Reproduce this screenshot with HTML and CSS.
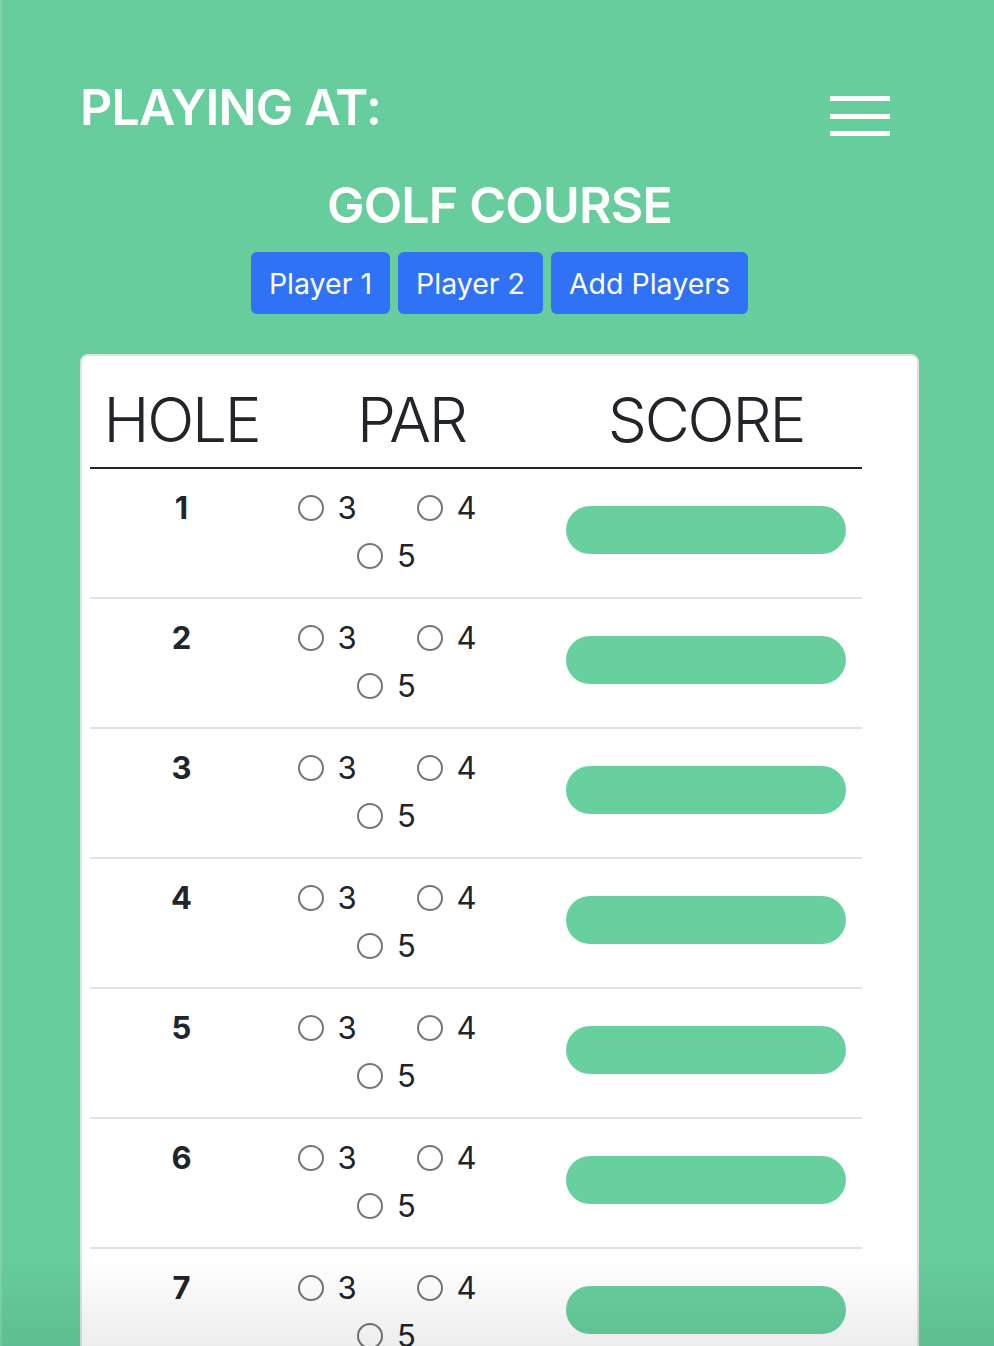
FILE: index.html
```html
<!DOCTYPE html>
<html lang="en">
<head>
<meta charset="utf-8">
<title>Golf Scorecard</title>
<link rel="stylesheet" href="styles.css">
</head>
<body>
<div class="page">
  <header class="topbar">
    <h3 class="playing">PLAYING AT:</h3>
    <button class="menu" aria-label="Menu">
      <svg width="60" height="40" viewBox="0 0 60 40"><rect x="0" y="0" width="60" height="5" fill="#fff"/><rect x="0" y="18" width="60" height="5" fill="#fff"/><rect x="0" y="35" width="60" height="5" fill="#fff"/></svg>
    </button>
  </header>
  <h3 class="course">GOLF COURSE</h3>
  <div class="players">
    <button class="btn">Player 1</button>
    <button class="btn">Player 2</button>
    <button class="btn">Add Players</button>
  </div>
  <div class="card">
    <div class="table">
      <div class="thead">
        <div class="th">HOLE</div>
        <div class="th">PAR</div>
        <div class="th">SCORE</div>
      </div>
      <div class="row">
        <div class="hole">1</div>
        <div class="par"><label class="opt"><input type="radio" name="p1"><span>3</span></label><label class="opt"><input type="radio" name="p1"><span>4</span></label><label class="opt"><input type="radio" name="p1"><span>5</span></label></div>
        <div class="score"><span class="pill"></span></div>
      </div>
      <div class="row">
        <div class="hole">2</div>
        <div class="par"><label class="opt"><input type="radio" name="p2"><span>3</span></label><label class="opt"><input type="radio" name="p2"><span>4</span></label><label class="opt"><input type="radio" name="p2"><span>5</span></label></div>
        <div class="score"><span class="pill"></span></div>
      </div>
      <div class="row">
        <div class="hole">3</div>
        <div class="par"><label class="opt"><input type="radio" name="p3"><span>3</span></label><label class="opt"><input type="radio" name="p3"><span>4</span></label><label class="opt"><input type="radio" name="p3"><span>5</span></label></div>
        <div class="score"><span class="pill"></span></div>
      </div>
      <div class="row">
        <div class="hole">4</div>
        <div class="par"><label class="opt"><input type="radio" name="p4"><span>3</span></label><label class="opt"><input type="radio" name="p4"><span>4</span></label><label class="opt"><input type="radio" name="p4"><span>5</span></label></div>
        <div class="score"><span class="pill"></span></div>
      </div>
      <div class="row">
        <div class="hole">5</div>
        <div class="par"><label class="opt"><input type="radio" name="p5"><span>3</span></label><label class="opt"><input type="radio" name="p5"><span>4</span></label><label class="opt"><input type="radio" name="p5"><span>5</span></label></div>
        <div class="score"><span class="pill"></span></div>
      </div>
      <div class="row">
        <div class="hole">6</div>
        <div class="par"><label class="opt"><input type="radio" name="p6"><span>3</span></label><label class="opt"><input type="radio" name="p6"><span>4</span></label><label class="opt"><input type="radio" name="p6"><span>5</span></label></div>
        <div class="score"><span class="pill"></span></div>
      </div>
      <div class="row">
        <div class="hole">7</div>
        <div class="par"><label class="opt"><input type="radio" name="p7"><span>3</span></label><label class="opt"><input type="radio" name="p7"><span>4</span></label><label class="opt"><input type="radio" name="p7"><span>5</span></label></div>
        <div class="score"><span class="pill"></span></div>
      </div>
    </div>
  </div>
</div>
<div class="fade"></div>
</body>
</html>
```

FILE: styles.css
```css
* { box-sizing: border-box; }
html, body { margin: 0; padding: 0; }
body {
  background: #67cd9c;
  font-family: "Inter", "Noto Sans", sans-serif;
  color: #212529;
  height: 1346px;
  overflow: hidden;
  border-left: 2px solid #7dd5aa;
}
.page {
  padding: 0 75px 0 78px;
}
.topbar {
  display: flex;
  justify-content: space-between;
  align-items: flex-start;
  padding-top: 76px;
}
.playing {
  margin: 0;
  color: #fff;
  font-size: 50px;
  font-weight: 600;
  line-height: 62px;
  letter-spacing: -0.8px;
}
.menu {
  background: none;
  border: 0;
  padding: 0;
  margin: 20px 29px 0 0;
  display: block;
  line-height: 0;
}
.course {
  margin: 36px 0 0;
  text-align: center;
  color: #fff;
  font-size: 50px;
  font-weight: 600;
  line-height: 62px;
  letter-spacing: -0.8px;
}
.players {
  display: flex;
  justify-content: center;
  gap: 8px;
  margin-top: 16px;
}
.btn {
  height: 62px;
  padding: 0 18px;
  background: #2f72f5;
  color: #fff;
  border: 0;
  border-radius: 6px;
  font-family: inherit;
  font-size: 28.5px;
  font-weight: 400;
}
.card {
  margin-top: 40px;
  background: #fff;
  border: 2px solid #e2e2e2;
  border-radius: 8px;
  padding: 0 8px;
}
.table {
  width: 772px;
}
.thead, .row {
  display: grid;
  grid-template-columns: 183px 277px 312px;
}
.thead {
  border-bottom: 2px solid #212529;
  padding: 25px 0 9px;
}
.th {
  text-align: center;
  font-size: 62px;
  font-weight: 300;
  line-height: 77px;
  letter-spacing: -2.2px;
}
.row {
  height: 130px;
  border-bottom: 2px solid #dee2e6;
}
.hole {
  text-align: center;
  font-weight: 700;
  font-size: 31px;
  line-height: 48px;
  padding-top: 15px;
}
.par {
  align-self: center;
  display: flex;
  flex-wrap: wrap;
  justify-content: center;
  padding-bottom: 2px;
}
.opt {
  width: 119px;
  height: 48px;
  display: inline-flex;
  align-items: center;
  padding-left: 5px;
  font-size: 31px;
  line-height: 48px;
}
.opt input {
  appearance: none;
  -webkit-appearance: none;
  width: 26px;
  height: 26px;
  margin: 0 14px 0 0;
  border: 2px solid #767676;
  border-radius: 50%;
  background: #fff;
}
.score {
  align-self: center;
  display: flex;
  justify-content: center;
  padding-bottom: 6px;
}
.pill {
  display: block;
  width: 280px;
  height: 48px;
  border-radius: 24px;
  background: #68d09e;
}
.fade {
  position: fixed;
  left: 0;
  right: 0;
  bottom: 0;
  height: 90px;
  background: linear-gradient(to bottom, rgba(0,0,0,0), rgba(0,0,0,0.07));
  pointer-events: none;
}
```
